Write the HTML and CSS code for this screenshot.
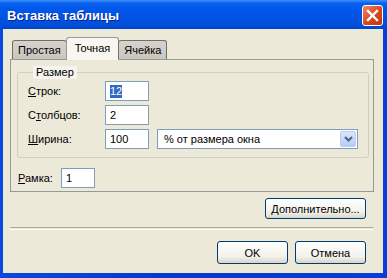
FILE: index.html
```html
<!DOCTYPE html>
<html lang="ru">
<head>
  <meta charset="UTF-8">
  <title>Вставка таблицы</title>
  <link rel="stylesheet" href="styles.css">
</head>
<body>
  <div class="window">
    <div class="titlebar">
      <span class="title">Вставка таблицы</span>
      <button class="close-btn">
        <svg width="13" height="13" viewBox="0 0 13 13"><path d="M2 2 L11 11 M11 2 L2 11" stroke="#fff" stroke-width="2.4" stroke-linecap="square"/></svg>
      </button>
    </div>

    <div class="client">
      <div class="tabs">
        <div class="tab">Простая</div>
        <div class="tab active">Точная</div>
        <div class="tab">Ячейка</div>
      </div>

      <div class="panel">
        <fieldset class="group">
          <legend>Размер</legend>
          <div class="row">
            <label><u>С</u>трок:</label>
            <div class="field small"><span class="sel">12</span></div>
          </div>
          <div class="row">
            <label>С<u>т</u>олбцов:</label>
            <div class="field small">2</div>
          </div>
          <div class="row">
            <label><u>Ш</u>ирина:</label>
            <div class="field small">100</div>
            <div class="field combo">
              <span>% от размера окна</span>
              <span class="drop">
                <svg width="9" height="6" viewBox="0 0 9 6"><path d="M1 1 L4.5 4.5 L8 1" fill="none" stroke="#4D6185" stroke-width="2"/></svg>
              </span>
            </div>
          </div>
        </fieldset>

        <div class="row frame-row">
          <label><u>Р</u>амка:</label>
          <div class="field tiny">1</div>
        </div>
      </div>

      <div class="more-line">
        <button class="btn more"><u>Д</u>ополнительно...</button>
      </div>

      <div class="separator"></div>

      <div class="actions">
        <button class="btn">OK</button>
        <button class="btn">Отмена</button>
      </div>
    </div>
  </div>
</body>
</html>
```

FILE: styles.css
```css
body {
  margin: 0;
  background: #0637d0;
  font-family: "Liberation Sans", Arial, sans-serif;
  font-size: 11px;
  color: #000;
}
.window {
  width: 387px;
  height: 278px;
  display: flex;
  flex-direction: column;
  background: linear-gradient(90deg, #0a48e0, #0637d0 50%, #0a3ed8);
  box-sizing: border-box;
}
.titlebar {
  height: 29px;
  display: flex;
  align-items: center;
  justify-content: space-between;
  padding: 0 4px 0 7px;
  background: linear-gradient(#3d8ff9 0, #0b62ee 3px, #0058ec 8px, #0055e5 50%, #004fd9 85%, #0044cc 100%);
  flex-shrink: 0;
}
.title {
  color: #fff;
  font-weight: bold;
  font-size: 13px;
  text-shadow: 1px 1px 0 #0a1f8e;
  margin-top: 1px;
}
.close-btn {
  width: 21px;
  height: 21px;
  padding: 0;
  border: 1px solid #fff;
  border-radius: 3px;
  background: linear-gradient(135deg, #ee8a6a, #d8451e 55%, #c0360f);
  display: flex;
  align-items: center;
  justify-content: center;
  margin-top: 1px;
}
.client {
  flex: 1;
  margin: 0 4px 5px 3px;
  background: #ece9d8;
  padding: 8px 9px 0 7px;
  display: flex;
  flex-direction: column;
}
.tabs {
  display: flex;
  align-items: flex-end;
  height: 22px;
  padding-left: 2px;
  position: relative;
  z-index: 1;
}
.tab {
  height: 19px;
  box-sizing: border-box;
  padding: 0 5px;
  line-height: 18px;
  background: linear-gradient(#d6d3cc, #c9c6bd);
  border: 1px solid #6f6f6f;
  border-bottom: none;
  border-radius: 3px 3px 0 0;
  margin-right: 1px;
}
.tab.active {
  height: 23px;
  line-height: 20px;
  padding: 0 8px;
  margin: 0 0 -1px -2px;
  background: #f7f6f1;
  border-color: #919b9c;
}
.tab.active + .tab {
  margin-left: -1px;
}
.panel {
  height: 133px;
  box-sizing: border-box;
  border: 1px solid #919b9c;
  padding: 6px 7px 0 6px;
}
.group {
  margin: 0;
  padding: 0 10px 8px 10px;
  border: 1px solid #d0d0bf;
  border-radius: 3px;
  display: flex;
  flex-direction: column;
  gap: 4px;
}
.group legend {
  padding: 0 3px;
  margin-left: 5px;
  background: #f5f4ee;
  line-height: 13px;
  margin-bottom: 2px;
}
.row {
  display: flex;
  align-items: center;
  height: 20px;
}
.row label {
  width: 77px;
}
.field {
  height: 20px;
  box-sizing: border-box;
  border: 1px solid #7f9db9;
  background: #fff;
  display: flex;
  align-items: center;
  padding: 0 4px;
}
.field.small {
  width: 44px;
}
.field.tiny {
  width: 34px;
}
.sel {
  background: #316ac5;
  color: #fff;
  line-height: 13px;
}
.field.combo {
  width: 201px;
  margin-left: 8px;
  justify-content: space-between;
  padding: 0 1px 0 6px;
}
.drop {
  width: 16px;
  height: 16px;
  box-sizing: border-box;
  border: 1px solid #b9cdf5;
  border-radius: 2px;
  background: linear-gradient(#dbe5fb, #b7cbf6);
  display: flex;
  align-items: center;
  justify-content: center;
}
.frame-row {
  margin-top: 10px;
  padding-left: 1px;
}
.frame-row label {
  width: 43px;
}
.more-line {
  display: flex;
  justify-content: flex-end;
  padding-right: 8px;
  margin-top: 6px;
}
.btn {
  font-family: "Liberation Sans", Arial, sans-serif;
  font-size: 11px;
  color: #000;
  height: 23px;
  width: 71px;
  padding: 0;
  border: 1px solid #003c74;
  border-radius: 3px;
  background: linear-gradient(#ffffff, #f2f1ea 70%, #d8d5c8);
}
.btn.more {
  width: 101px;
  height: 21px;
}
.separator {
  margin-top: 8px;
  height: 1px;
  border-top: 1px solid #aca899;
  border-bottom: 1px solid #fff;
  margin-right: 1px;
}
.actions {
  display: flex;
  justify-content: flex-end;
  gap: 7px;
  padding-right: 8px;
  margin-top: 11px;
}
```
